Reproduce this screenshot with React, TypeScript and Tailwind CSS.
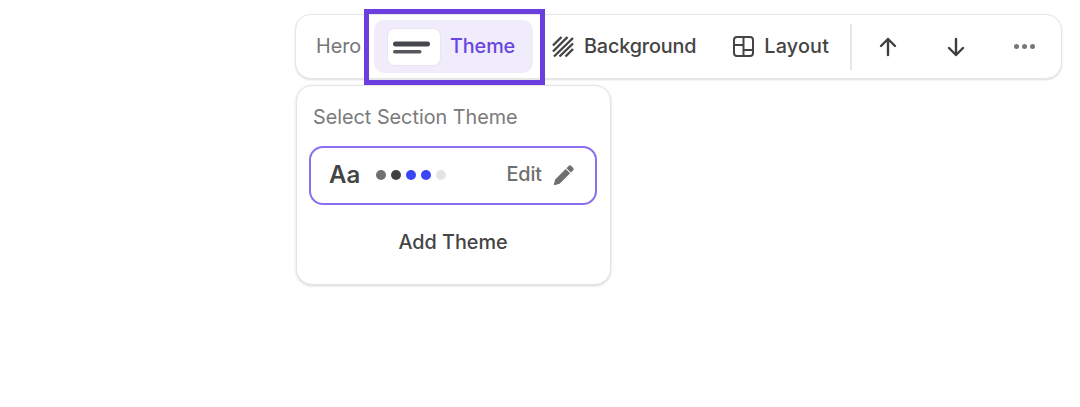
import React from "react";

function ThemeIcon() {
  return (
    <svg width="38" height="16" viewBox="0 0 38 16" fill="none">
      <path d="M3.5 5h32" stroke="#45474c" strokeWidth="5" strokeLinecap="round" />
      <path d="M2.75 12.7h25" stroke="#55575c" strokeWidth="3.5" strokeLinecap="round" />
    </svg>
  );
}

function BackgroundIcon() {
  return (
    <svg width="22" height="22" viewBox="0 0 22 22" fill="none" stroke="#444" strokeWidth="2.4">
      <path d="M1 9.5 9.5 1" />
      <path d="M1 15.5 15.5 1" />
      <path d="M2 20.5 21 2" />
      <path d="M7.5 20.5 21 7.5" />
      <path d="M13.5 20.5 21 13" />
    </svg>
  );
}

function LayoutIcon() {
  return (
    <svg width="21" height="21" viewBox="0 0 21 21" fill="none" stroke="#444" strokeWidth="2">
      <rect x="1" y="1" width="19" height="19" rx="3" />
      <path d="M10.5 1v19M1 9h9.5M10.5 14H20" />
    </svg>
  );
}

function ArrowUp() {
  return (
    <svg width="18" height="20" viewBox="0 0 18 20" fill="none" stroke="#3f3f3f" strokeWidth="2.4" strokeLinecap="round" strokeLinejoin="round">
      <path d="M9 18V2M2 9l7-7 7 7" />
    </svg>
  );
}

function ArrowDown() {
  return (
    <svg width="18" height="20" viewBox="0 0 18 20" fill="none" stroke="#3f3f3f" strokeWidth="2.4" strokeLinecap="round" strokeLinejoin="round">
      <path d="M9 2v16M2 11l7 7 7-7" />
    </svg>
  );
}

function Pencil() {
  return (
    <svg width="20" height="20" viewBox="0 0 20 20" fill="#6f6f6f">
      <path d="M14.6 1a1.9 1.9 0 0 1 2.7 0l1.7 1.7a1.9 1.9 0 0 1 0 2.7L16.8 7.6 12.4 3.2z" />
      <path d="M11.7 3.9l4.4 4.4L5.6 18.8 1.2 20a1 1 0 0 1-1.2-1.2l1.2-4.4z" />
    </svg>
  );
}

export default function App() {
  const dots = ["bg-[#707070]", "bg-[#3f4145]", "bg-[#3a46f5]", "bg-[#3a46f5]", "bg-[#e4e4e4]"];
  return (
    <div className="relative h-[407px] w-[1080px] bg-white pl-[295px] pt-[14px] text-[19.8px] leading-none [font-family:Inter,sans-serif]">
      <div className="flex h-[65px] w-[767px] items-center rounded-[16px] border border-[#e6e6e6] bg-white shadow-[0_1px_2px_rgba(0,0,0,0.14)]">
        <span className="ml-[20px] w-[58px] text-[#757575]">Hero</span>
        <div className="flex h-[53px] w-[159px] items-center rounded-[10px] bg-[#f0ecfc] pl-[13px]">
          <span className="flex h-[38px] w-[54px] items-center justify-center rounded-[8px] border border-[#e8e5f0] bg-white pr-[7px]">
            <ThemeIcon />
          </span>
          <span className="ml-[9px] font-[470] tracking-[-0.1px] text-[#6846e0]">Theme</span>
        </div>
        <div className="ml-[19px] flex items-center gap-[10px] text-[#444]">
          <BackgroundIcon />
          <span className="font-[470] tracking-[-0.15px]">Background</span>
        </div>
        <div className="ml-[37px] flex items-center gap-[10px] text-[#444]">
          <LayoutIcon />
          <span className="font-[470] tracking-[0.2px]">Layout</span>
        </div>
        <div className="ml-[21px] h-[46px] w-[2px] bg-[#e6e6e6]" />
        <div className="ml-[27px] flex w-[18px] justify-center"><ArrowUp /></div>
        <div className="ml-[50px] flex w-[18px] justify-center"><ArrowDown /></div>
        <div className="ml-[49px] flex gap-[3px]">
          <span className="h-[5px] w-[5px] rounded-full bg-[#777]" />
          <span className="h-[5px] w-[5px] rounded-full bg-[#777]" />
          <span className="h-[5px] w-[5px] rounded-full bg-[#777]" />
        </div>
      </div>

      <div className="ml-px mt-[6px] h-[200px] w-[315px] rounded-[16px] border border-[#e4e4e4] bg-white pl-[12px] pr-[13px] pt-[22px] shadow-[0_1px_3px_rgba(0,0,0,0.16)]">
        <div className="pl-[4px] text-[#7a7a7a]">Select Section Theme</div>
        <div className="mt-[18px] flex h-[59px] w-[288px] items-center rounded-[14px] border-2 border-[#8a70ee] pl-[18px] pr-[21px]">
          <span className="text-[24px] font-semibold text-[#444]">Aa</span>
          <div className="ml-[16px] flex gap-[5px]">
            {dots.map((d, i) => (
              <span key={i} className={`h-[10px] w-[10px] rounded-full ${d}`} />
            ))}
          </div>
          <span className="ml-auto font-[470] tracking-[-0.1px] text-[#6f6f6f]">Edit</span>
          <span className="ml-[12px] flex"><Pencil /></span>
        </div>
        <div className="mt-[28px] text-center font-[470] text-[#444]">Add Theme</div>
      </div>

      <div className="pointer-events-none absolute left-[364px] top-[9px] h-[76px] w-[181px] border-[5px] border-[#6a3fdd]" />
    </div>
  );
}
